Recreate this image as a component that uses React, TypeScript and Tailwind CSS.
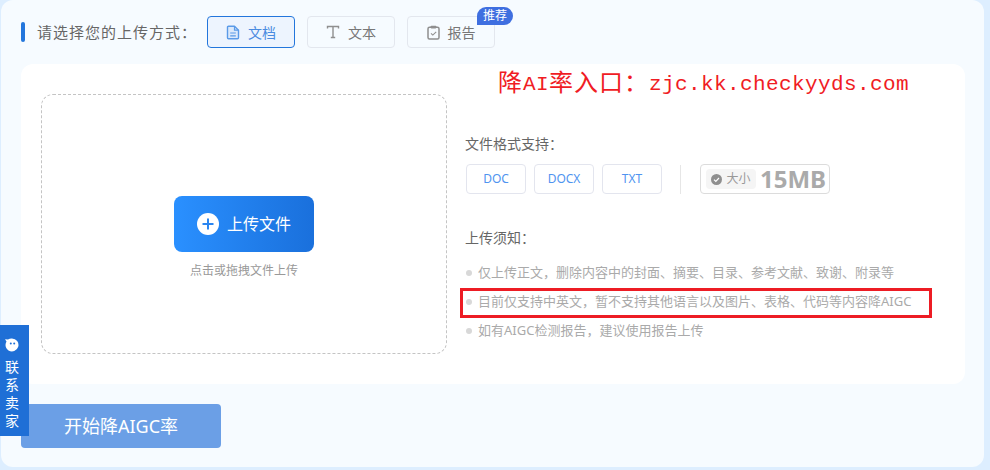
import React from "react";

const FONT = { fontFamily: '"Noto Sans", "Noto Sans CJK SC", sans-serif' };

function DocIcon() {
  return (
    <svg width="14" height="15" viewBox="0 0 14 15" fill="none">
      <path d="M1.5 2.2c0-.6.4-1 1-1h6l4 4v7.6c0 .6-.4 1-1 1h-9c-.6 0-1-.4-1-1z" fill="#dbe9fb" stroke="#5a9ae8" strokeWidth="1.4" strokeLinejoin="round" />
      <path d="M8.5 1.2v4h4" stroke="#5a9ae8" strokeWidth="1.2" />
      <path d="M4.2 8h5.6M4.2 10.8h5.6" stroke="#5a9ae8" strokeWidth="1.2" />
    </svg>
  );
}

function TextIcon() {
  return (
    <svg width="14" height="14" viewBox="0 0 14 14" fill="none">
      <path d="M1.5 3.5V1.5h11v2M7 1.5v11M4.8 12.5h4.4" stroke="#8f8f8f" strokeWidth="1.4" />
    </svg>
  );
}

function ClipIcon() {
  return (
    <svg width="13" height="15" viewBox="0 0 13 15" fill="none">
      <rect x="1" y="2.2" width="11" height="11.8" rx="1.5" stroke="#8f8f8f" strokeWidth="1.5" />
      <rect x="3.6" y="0.8" width="5.8" height="2.6" rx="0.8" fill="#8f8f8f" />
      <path d="M4 8.3l1.8 1.8L9.2 6.8" stroke="#8f8f8f" strokeWidth="1.1" />
    </svg>
  );
}

function Tab({ icon, label, active, badge }: { icon: React.ReactNode; label: string; active?: boolean; badge?: boolean }) {
  return (
    <div
      className={
        active
          ? "relative flex h-8 w-[88px] items-center justify-center gap-[8px] rounded-[4px] border border-[#2376dc] bg-[#edf4fe] text-[14px] text-[#4a8be0]"
          : "relative flex h-8 w-[88px] items-center justify-center gap-[8px] rounded-[4px] border border-[#e3e7ee] text-[14px] text-[#777777]"
      }
    >
      {icon}
      <span>{label}</span>
      {badge && (
        <span className="absolute left-[69px] top-[-10px] flex h-[18px] w-[36px] items-center justify-center rounded-t-[9px] rounded-br-[9px] bg-[#3f6fe0] text-[12px] text-white">
          推荐
        </span>
      )}
    </div>
  );
}

function Chip({ label }: { label: string }) {
  return (
    <div className="flex h-[30px] w-[60px] items-center justify-center rounded-[4px] border border-[#e3e5ee] text-[12px] text-[#4f94f0]">
      {label}
    </div>
  );
}

function Note({ text }: { text: string }) {
  return (
    <div className="flex h-[29px] items-center gap-[6px] pl-[1px] text-[13px] text-[#aaaaaa]">
      <span className="h-[6px] w-[6px] rounded-full bg-[#d8d8d8]" />
      <span className="whitespace-nowrap">{text}</span>
    </div>
  );
}

export default function App() {
  return (
    <div className="h-[470px] w-[990px] overflow-hidden bg-[#ddeeff] pb-[3px] pl-[1px] pr-[6px]" style={FONT}>
      <div className="relative flex h-full flex-col rounded-[12px] bg-[#f6fbff] px-[20px] pt-[16px]">
        <div className="flex h-8 items-center">
          <span className="h-[20px] w-[4px] rounded-[2px] bg-[#2376dc]" />
          <span className="ml-[12px] w-[170px] whitespace-nowrap text-[15px] tracking-[1px] text-[#666666]">请选择您的上传方式：</span>
          <div className="flex gap-[12px]">
            <Tab icon={<DocIcon />} label="文档" active />
            <Tab icon={<TextIcon />} label="文本" />
            <Tab icon={<ClipIcon />} label="报告" badge />
          </div>
        </div>

        <div className="mt-[16px] flex h-[320px] w-[944px] rounded-[12px] bg-white pl-[20px] pt-[30px]">
          <div className="flex h-[260px] w-[406px] flex-col items-center justify-center rounded-[12px] border border-dashed border-[#c4c4c4] pt-[28px]">
            <div className="flex h-[56px] w-[140px] items-center justify-center gap-[8px] rounded-[8px] bg-gradient-to-r from-[#2a90ff] to-[#1a70dc] text-[16px] text-white">
              <svg width="22" height="22" viewBox="0 0 22 22">
                <circle cx="11" cy="11" r="11" fill="#ffffff" />
                <path d="M11 5.5v11M5.5 11h11" stroke="#2a85f0" strokeWidth="2" />
              </svg>
              <span>上传文件</span>
            </div>
            <div className="mt-[10px] text-[12px] text-[#999999]">点击或拖拽文件上传</div>
          </div>

          <div className="ml-[18px] flex flex-col">
            <div className="mt-[38px] text-[14px] leading-[24px] text-[#666666]">文件格式支持：</div>
            <div className="mt-[8px] flex items-center pl-[1px]">
              <div className="flex gap-[8px]">
                <Chip label="DOC" />
                <Chip label="DOCX" />
                <Chip label="TXT" />
              </div>
              <span className="ml-[18px] h-[29px] w-px bg-[#e6e6e6]" />
              <div className="ml-[19px] flex h-[30px] w-[130px] items-center rounded-[4px] border border-[#dcdcdc] pl-[5px]">
                <div className="flex h-[20px] w-[50px] items-center justify-center gap-[4px] rounded-[4px] bg-[#f5f5f5] text-[12px] text-[#999999]">
                  <svg width="11" height="11" viewBox="0 0 11 11" fill="none">
                    <circle cx="5.5" cy="5.5" r="5.5" fill="#8f8f8f" />
                    <path d="M3 5.6l1.8 1.8L8 4" stroke="#ffffff" strokeWidth="1.2" />
                  </svg>
                  <span>大小</span>
                </div>
                <span className="ml-[4px] text-[24px] leading-none font-bold text-[#aaaaaa]">15MB</span>
              </div>
            </div>
            <div className="mt-[32px] text-[14px] leading-[24px] text-[#666666]">上传须知：</div>
            <div className="mt-[8px] flex flex-col">
              <Note text="仅上传正文，删除内容中的封面、摘要、目录、参考文献、致谢、附录等" />
              <Note text="目前仅支持中英文，暂不支持其他语言以及图片、表格、代码等内容降AIGC" />
              <Note text="如有AIGC检测报告，建议使用报告上传" />
            </div>
          </div>
        </div>

        <div className="mt-[20px] flex h-[44px] w-[200px] items-center justify-center rounded-[4px] bg-[#6b9fe6] text-[18px] text-white">
          开始降AIGC率
        </div>

        <div className="absolute left-[-1px] top-[325px] flex h-[111px] w-[29px] flex-col items-center bg-[#1f6fd6] pr-[5px] pt-[13px] text-[14px] leading-[18px] text-white">
          <svg width="14" height="14" viewBox="0 0 14 14" className="mb-[6px]">
            <path d="M7 0.5a6.5 6.5 0 1 1-3.5 12C1.5 11 .5 9 .5 7c0-1.3.4-2.5 1-3.5L0 1.2l3 .3A6.5 6.5 0 0 1 7 .5z" fill="#ffffff" />
            <circle cx="5.8" cy="5.5" r="1" fill="#1f6fd6" />
            <circle cx="9.2" cy="5.5" r="1" fill="#1f6fd6" />
          </svg>
          <span>联</span>
          <span>系</span>
          <span>卖</span>
          <span>家</span>
        </div>

        <div className="absolute left-[497px] top-[69px] flex h-[32px] items-center whitespace-nowrap text-[#f01c24]" style={{ fontFamily: '"Liberation Mono", "Noto Sans CJK SC", monospace' }}>
          <span className="text-[24px] tracking-[1px]">降</span>
          <span className="text-[21px] tracking-[0.4px]">AI</span>
          <span className="text-[24px] tracking-[1px]">率入口：</span>
          <span className="text-[21px] tracking-[0.4px]">zjc.kk.checkyyds.com</span>
        </div>

        <div className="absolute left-[459px] top-[288px] h-[30px] w-[472px] border-[3px] border-[#ed1c24]" />
      </div>
    </div>
  );
}
